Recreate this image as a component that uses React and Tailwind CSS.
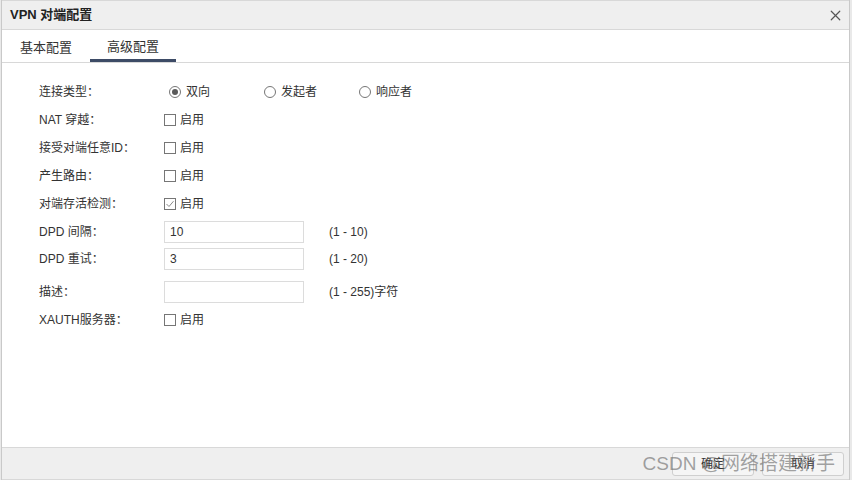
import { X } from 'lucide-react'

const font = { fontFamily: '"Liberation Sans", "Noto Sans CJK SC", sans-serif' }

function Radio({ checked, label }) {
  return (
    <label className="flex items-center gap-[5px]">
      <span className="w-[12px] h-[12px] rounded-full border border-[#767676] bg-white flex items-center justify-center">
        {checked && <span className="w-[6px] h-[6px] rounded-full bg-[#5a5a5a]" />}
      </span>
      <span>{label}</span>
    </label>
  )
}

function Check({ checked }) {
  return (
    <label className="flex items-center gap-[4px]">
      <span className="w-[12px] h-[12px] border border-[#767676] bg-white flex items-center justify-center">
        {checked && (
          <svg width="10" height="10" viewBox="0 0 10 10">
            <path d="M1.5 5 L4 7.5 L8.5 2.2" fill="none" stroke="#8a8a8a" strokeWidth="1" />
          </svg>
        )}
      </span>
      <span>启用</span>
    </label>
  )
}

function Row({ label, children, h = 'h-[28px]' }) {
  return (
    <div className={`flex items-center ${h}`}>
      <div className="w-[125px]">{label}</div>
      {children}
    </div>
  )
}

function Field({ value, hint }) {
  return (
    <div className="flex items-center">
      <div className="w-[140px] h-[22px] border border-[#dcdcdc] bg-white px-[5px] flex items-center">{value}</div>
      <span className="ml-[25px]">{hint}</span>
    </div>
  )
}

export default function App() {
  return (
    <div className="w-[852px] h-[480px] bg-[#e9e9e9] overflow-hidden text-[12px] text-[#333]" style={font}>
      <div className="relative w-[849px] h-[480px] ml-[1px] border-x border-[#c9c9c9] bg-white flex flex-col">
        {/* title */}
        <div className="h-[30px] shrink-0 bg-[#efefef] border-t border-b border-[#d8d8d8] flex items-center justify-between pl-[8px] pr-[5px]">
          <span className="text-[13px] font-bold text-[#222]">VPN 对端配置</span>
          <X className="w-[17px] h-[17px] text-[#555]" strokeWidth={1.7} />
        </div>

        {/* tabs */}
        <div className="h-[33px] shrink-0 border-b border-[#d8d8d8] flex items-end text-[13px]">
          <div className="w-[88px] h-full flex items-center justify-center pt-[4px]">基本配置</div>
          <div className="w-[86px] h-full flex items-center justify-center pt-[4px] border-b-[3px] border-[#3d4b66] text-[#333]">
            高级配置
          </div>
        </div>

        {/* form */}
        <div className="flex-1 pl-[37px] pt-[15px]">
          <Row label="连接类型：">
            <div className="flex items-center ml-[5px]">
              <div className="w-[95px]"><Radio checked label="双向" /></div>
              <div className="w-[95px]"><Radio label="发起者" /></div>
              <Radio label="响应者" />
            </div>
          </Row>
          <Row label="NAT 穿越："><Check /></Row>
          <Row label="接受对端任意ID："><Check /></Row>
          <Row label="产生路由："><Check /></Row>
          <Row label="对端存活检测："><Check checked /></Row>
          <Row label="DPD 间隔：" h="h-[27px]"><Field value="10" hint="(1 - 10)" /></Row>
          <Row label="DPD 重试：" h="h-[27px]"><Field value="3" hint="(1 - 20)" /></Row>
          <div className="h-[6px]" />
          <Row label="描述：" h="h-[28px]"><Field value="" hint="(1 - 255)字符" /></Row>
          <Row label="XAUTH服务器："><Check /></Row>
        </div>

        {/* footer */}
        <div className="h-[33px] shrink-0 bg-[#efefef] border-t border-[#d8d8d8] border-b flex items-center justify-end gap-[8px] pr-[5px]">
          <button className="w-[82px] h-[24px] border border-[#cfcfcf] rounded-[3px] bg-[#f5f5f5] text-[12px]">确定</button>
          <button className="w-[82px] h-[24px] border border-[#cfcfcf] rounded-[3px] bg-[#f5f5f5] text-[12px]">取消</button>
        </div>

        <div className="absolute right-[14px] bottom-[7px] text-[19px] text-[#666]/60 leading-none pointer-events-none">
          CSDN @网络搭建新手
        </div>
      </div>
    </div>
  )
}
